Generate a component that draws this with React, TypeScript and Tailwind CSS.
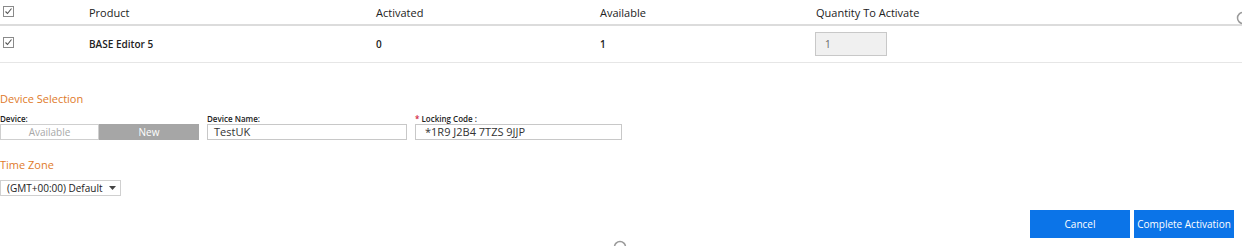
function CheckIcon() {
  return (
    <svg width="11" height="11" viewBox="0 0 11 11" className="block">
      <rect x="0.5" y="0.5" width="10" height="10" fill="#fff" stroke="#8a8a8a" />
      <path d="M2.5 5.5 L4.5 7.5 L8.5 2.5" fill="none" stroke="#555" strokeWidth="1.1" />
    </svg>
  );
}

function Spinner() {
  return (
    <svg width="14" height="14" viewBox="0 0 14 14">
      <circle cx="7" cy="7" r="5.5" fill="none" stroke="#9a9a9a" strokeWidth="1.5" />
    </svg>
  );
}

export default function App() {
  return (
    <div
      className="relative w-[1242px] h-[246px] overflow-hidden bg-white text-[#222]"
      style={{ fontFamily: '"Open Sans", "Noto Sans", sans-serif' }}
    >
      {/* table */}
      <div className="grid grid-cols-[89px_287px_224px_216px_1fr] items-center h-[26px] pt-[2px] border-b-2 border-[#dcdcdc] text-[11px]">
        <div className="pl-[3px] -mt-[3px]">
          <CheckIcon />
        </div>
        <div>Product</div>
        <div>Activated</div>
        <div>Available</div>
        <div>Quantity To Activate</div>
      </div>
      <div className="grid grid-cols-[89px_287px_224px_216px_1fr] items-center h-[37px] border-b border-[#e6e6e6] text-[10px] font-semibold">
        <div className="pl-[3px] -mt-[3px]">
          <CheckIcon />
        </div>
        <div>BASE Editor 5</div>
        <div>0</div>
        <div>1</div>
        <div className="-ml-px">
          <div className="w-[72px] h-[24px] bg-[#f0f0f0] border border-[#c8c8c8] flex items-center pl-[9px] text-[10px] font-normal text-[#666]">
            1
          </div>
        </div>
      </div>

      {/* device selection */}
      <div className="pt-[28px] text-[11px] text-[#e07a2a] leading-[16px]">Device Selection</div>
      <div className="flex gap-[8px] mt-[7px]">
        <div className="flex flex-col">
          <span className="text-[8px] font-semibold leading-[10px]">Device:</span>
          <div className="flex w-[199px] h-[16px] text-[10px]">
            <div className="w-[99px] border border-[#cfcfcf] bg-white text-[#a8a8a8] flex items-center justify-center">
              Available
            </div>
            <div className="w-[100px] bg-[#a6a6a6] text-white flex items-center justify-center">New</div>
          </div>
        </div>
        <div className="flex flex-col">
          <span className="text-[8px] font-semibold leading-[10px]">Device Name:</span>
          <div className="w-[200px] h-[16px] border border-[#c8c8c8] flex items-center pl-[6px] text-[11px] text-[#333]">
            TestUK
          </div>
        </div>
        <div className="flex flex-col">
          <span className="text-[8px] font-semibold leading-[10px]">
            <span className="text-[#d0213b]">* </span>Locking Code :
          </span>
          <div className="w-[207px] h-[16px] border border-[#c8c8c8] flex items-center pl-[9px] text-[11px] text-[#333]">
            *1R9 J2B4 7TZS 9JJP
          </div>
        </div>
      </div>

      {/* time zone */}
      <div className="mt-[17px] text-[11px] text-[#e07a2a] leading-[16px]">Time Zone</div>
      <div className="mt-[7px] w-[121px] h-[16px] border border-[#d0d0d0] flex items-center pl-[6px] gap-[6px] text-[10px] text-[#222]">
        <span>(GMT+00:00) Default</span>
        <svg width="7" height="4" viewBox="0 0 7 4">
          <path d="M0 0 L7 0 L3.5 4 Z" fill="#444" />
        </svg>
      </div>

      {/* actions */}
      <div className="flex justify-end gap-[4px] pr-[8px] mt-[14px]">
        <button className="w-[100px] h-[28px] bg-[#0b74e8] text-white text-[10px]">Cancel</button>
        <button className="w-[100px] h-[28px] bg-[#0b74e8] text-white text-[10px]">Complete Activation</button>
      </div>

      {/* loading spinners peeking at edges */}
      <div className="absolute left-[1236px] top-[11px]">
        <Spinner />
      </div>
      <div className="absolute left-[613px] top-[240px]">
        <Spinner />
      </div>
    </div>
  );
}
